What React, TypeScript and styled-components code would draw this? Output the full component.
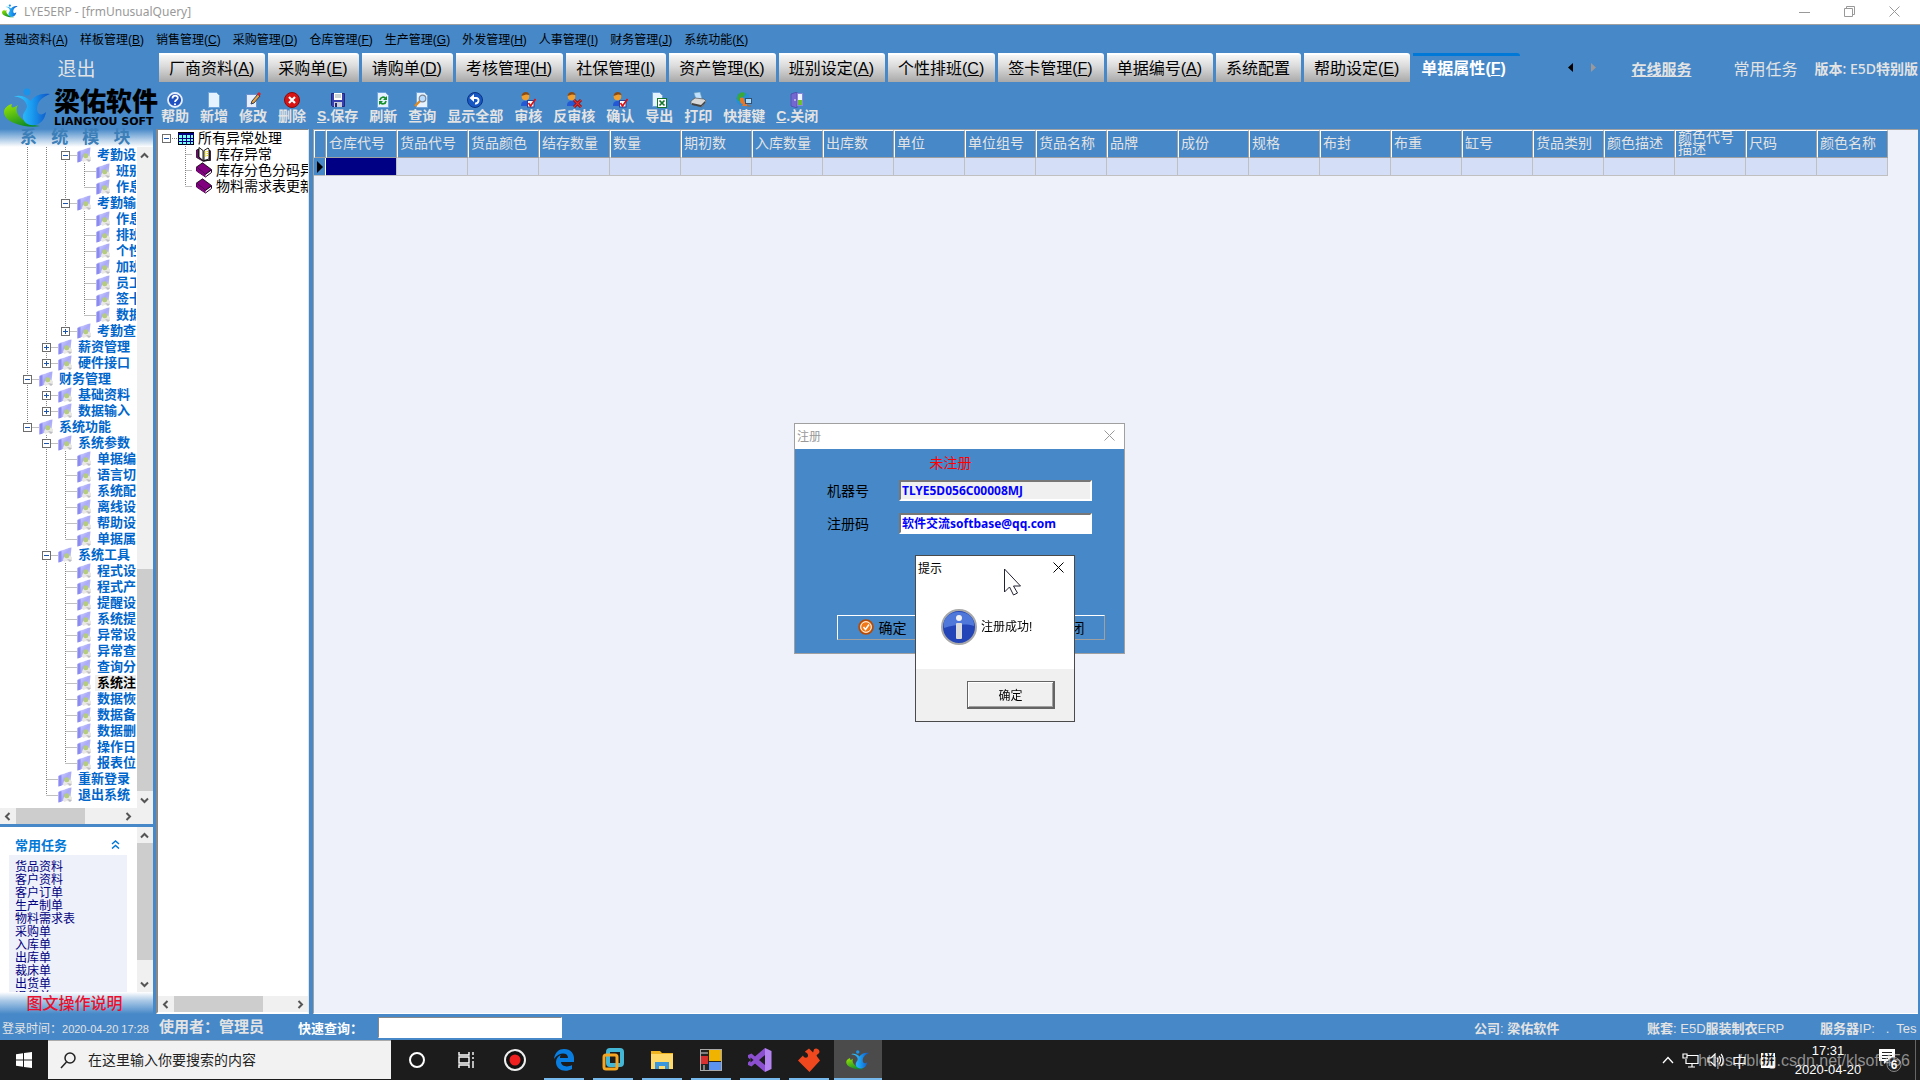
import React from 'react';
import styled, { createGlobalStyle, css } from 'styled-components';

const blue = '#4688c8';
const pale = '#eef1fa';
const soft = '#e3e3e3';
const link = '#0066cc';

const Global = createGlobalStyle`
  * { box-sizing: border-box; }
  body { margin: 0; font-family: "Liberation Sans", "Noto Sans CJK SC", sans-serif; font-size: 12px; }
  button, input { font: inherit; color: inherit; margin: 0; }
  button { background: none; border: 0; padding: 0; white-space: nowrap; }
  svg { display: block; flex: none; }
`;

const Screen = styled.div`
  display: flex;
  flex-direction: column;
  height: 100vh;
  overflow: hidden;
  background: ${blue};
`;

/* ---------- title, menu and tab bars ---------- */
const TitleBar = styled.header`
  display: flex;
  align-items: center;
  flex: none;
  height: 25px;
  padding: 0 14px 2px 2px;
  gap: 6px;
  background: #fff;
  border-bottom: 1px solid #a0a0a0;
  color: #999;
  font-family: "Noto Sans", "Noto Sans CJK SC", sans-serif;
`;
const TitleText = styled.h1`
  margin: 0;
  flex: 1;
  font-size: 12px;
  font-weight: 400;
`;
const WindowButtons = styled.div`
  display: flex;
  gap: 34px;
  padding-right: 6px;
`;
const MenuBar = styled.nav`
  display: flex;
  align-items: center;
  flex: none;
  height: 28px;
  padding: 0 0 2px 4px;
  gap: 12px;
  font-size: 12px;
  color: #000;
`;
const TabRow = styled.div`
  display: flex;
  flex: none;
  height: 29px;
`;
const Exit = styled.button`
  width: 159px;
  padding-right: 6px;
  font-size: 19px;
  color: ${soft};
`;
const Tabs = styled.div`
  display: flex;
  gap: 3px;
`;
const Tab = styled.button<{ $active?: boolean }>`
  padding: 0 11px 0 10px;
  font-size: 16px;
  line-height: 24px;
  color: #000;
  background: linear-gradient(#f6f6f6, #dcdcdc 40%, #a9a9a9);
  border-top: 2px solid #fff;
  border-top-right-radius: 3px;
  ${(p) =>
    p.$active &&
    css`
      color: #fff;
      background: none;
      font-weight: 700;
      padding: 0 14px 0 8px;
      border-top: 3px solid #0078d7;
    `}
`;
const TabExtras = styled.div`
  display: flex;
  align-items: center;
  margin-left: auto;
  padding-right: 2px;
  color: ${soft};
`;
const Arrows = styled.div`
  display: flex;
  gap: 18px;
  margin-right: 35px;
`;
const ServiceLink = styled.a`
  margin-right: 42px;
  padding-top: 2px;
  font-size: 15px;
  font-weight: 700;
  color: ${soft};
`;
const Common = styled.span`
  margin-right: 17px;
  font-size: 16px;
`;
const Version = styled.span`
  font-family: "Noto Sans", "Noto Sans CJK SC", sans-serif;
  font-size: 14px;
  font-weight: 500;
  b { font-weight: 700; }
`;

/* ---------- toolbar ---------- */
const ToolRow = styled.div`
  display: flex;
  flex: none;
  height: 47px;
`;
const Brand = styled.div`
  display: flex;
  align-items: center;
  gap: 3px;
  width: 161px;
  padding: 5px 0 0 4px;
  color: #000;
`;
const BrandName = styled.div`
  font-size: 26px;
  line-height: 28px;
  font-weight: 900;
  white-space: nowrap;
`;
const BrandSub = styled.div`
  font-family: "DejaVu Sans", sans-serif;
  font-size: 11px;
  line-height: 12px;
  font-weight: 700;
  white-space: nowrap;
`;
const Toolbar = styled.div`
  display: flex;
  align-items: flex-start;
  gap: 11px;
  padding-top: 10px;
`;
const Tool = styled.button`
  display: flex;
  flex-direction: column;
  align-items: center;
  font-size: 14px;
  line-height: 16px;
  font-weight: 700;
  color: ${soft};
`;

/* ---------- body ---------- */
const Body = styled.main`
  display: flex;
  flex: 1;
  min-height: 0;
`;
const Side = styled.aside`
  display: flex;
  flex-direction: column;
  width: 153px;
  flex: none;
`;
const ModuleBanner = styled.div`
  flex: none;
  height: 18px;
  padding-left: 20px;
  background: linear-gradient(${blue}, #fff);
  color: #3c7fb8;
  font-size: 17px;
  line-height: 18px;
  font-weight: 700;
  white-space: pre;
`;
const TreePane = styled.section`
  display: flex;
  flex: 1;
  min-height: 0;
  background: #fff;
`;
const TreeList = styled.ul`
  flex: 1;
  min-width: 0;
  margin: 0;
  padding: 0 1px 0 18px;
  list-style: none;
  overflow: hidden;
`;
const TreeItem = styled.li`
  display: flex;
  align-items: center;
  height: 16px;
`;
const TreeText = styled.a<{ $current?: boolean }>`
  margin-left: 3px;
  padding-left: 2px;
  flex: 1;
  overflow: hidden;
  font-size: 13px;
  line-height: 16px;
  font-weight: 700;
  white-space: nowrap;
  text-decoration: none;
  color: ${(p) => (p.$current ? '#000' : link)};
  background: ${(p) => (p.$current ? '#f0f0f0' : 'none')};
`;

const Bar = styled.div<{ $v?: boolean }>`
  display: flex;
  flex: none;
  flex-direction: ${(p) => (p.$v ? 'column' : 'row')};
  ${(p) => (p.$v ? 'width: 16px;' : 'height: 16px;')}
  background: #f0f0f0;
`;
const ArrowButton = styled.button`
  display: grid;
  place-items: center;
  flex: none;
  width: 15px;
  height: 16px;
`;
const Gap = styled.span<{ $n: number }>`
  flex: ${(p) => p.$n} 1 0;
`;
const Thumb = styled(Gap)`
  background: #cdcdcd;
`;
const SideHScroll = styled.div`
  display: grid;
  grid-template-columns: 1fr 17px;
  flex: none;
  background: #f0f0f0;
`;
const TaskPane = styled.section`
  display: flex;
  flex: none;
  height: 165px;
  margin-top: 3px;
  background: #fff;
`;
const TaskInner = styled.div`
  flex: 1;
  padding: 8px 10px 0 9px;
  overflow: hidden;
`;
const TaskHead = styled.div`
  display: flex;
  align-items: center;
  justify-content: space-between;
  height: 20px;
  padding: 0 7px 2px 6px;
  font-size: 13px;
  font-weight: 700;
  color: #0078d7;
`;
const TaskLinks = styled.div`
  display: flex;
  flex-direction: column;
  padding: 6px 6px 4px;
  background: ${pale};
  a {
    color: #000080;
    text-decoration: none;
    font-size: 12px;
    line-height: 13px;
  }
`;
const HelpBanner = styled.a`
  flex: none;
  height: 22px;
  padding: 1px 4px 0 0;
  background: linear-gradient(#fff, #a9c8e6 40%, ${blue});
  color: #e8102c;
  font-size: 16px;
  line-height: 21px;
  font-weight: 500;
  text-align: center;
  text-decoration: none;
`;

const Middle = styled.section`
  display: flex;
  flex-direction: column;
  flex: none;
  width: 153px;
  margin-left: 3px;
  background: #fff;
  border: 1px solid #888;
  border-left-width: 2px;
  border-right-color: #e3e3e3;
  border-bottom: 2px solid #fff;
`;
const MidList = styled.ul`
  flex: 1;
  margin: 0;
  padding: 0 0 0 4px;
  list-style: none;
  overflow: hidden;
`;
const MidItem = styled.li`
  display: flex;
  align-items: center;
  height: 16px;
  gap: 4px;
  font-size: 14px;
  line-height: 16px;
  white-space: nowrap;
  color: #000;
`;

const GridPane = styled.section`
  flex: 1;
  min-width: 0;
  margin: 0 2px 0 4px;
  background: ${pale};
  border-top: 1px solid #a0a0a0;
  border-left: 1px solid #a0a0a0;
  border-bottom: 1px solid #fff;
  overflow: hidden;
`;
const Table = styled.table`
  table-layout: fixed;
  border-collapse: separate;
  border-spacing: 0;
  width: 1574px;
  th {
    height: 28px;
    padding: 0 0 2px 2px;
    background: ${blue};
    color: ${soft};
    font-size: 14px;
    line-height: 12px;
    font-weight: 400;
    text-align: left;
    border-left: 1px solid #fff;
    border-top: 1px solid #fff;
    border-right: 1px solid #a0a0a0;
    border-bottom: 1px solid #a0a0a0;
  }
  td {
    height: 18px;
    padding: 0;
    background: #d4def7;
    border-right: 1px solid #c0c0c0;
    border-bottom: 1px solid #c0c0c0;
  }
`;
const MarkCol = styled.col`
  width: 12px;
`;
const Marker = styled.td`
  && { background: ${blue}; border-right-color: #fff; }
`;
const Picked = styled.td`
  && { background: #000084; }
`;

/* ---------- status bar ---------- */
const Status = styled.footer`
  display: flex;
  align-items: center;
  flex: none;
  height: 26px;
  padding-left: 2px;
  color: ${soft};
  white-space: nowrap;
`;
const Login = styled.span`
  width: 157px;
  font-size: 12px;
  time { font-size: 11px; }
`;
const User = styled.span`
  width: 139px;
  font-size: 15px;
  line-height: 20px;
  font-weight: 700;
`;
const QuickLabel = styled.label`
  width: 80px;
  font-size: 13px;
  font-weight: 700;
  color: #fff;
`;
const QuickInput = styled.input`
  width: 184px;
  height: 21px;
  background: #fff;
  border: 1px solid #fff;
  border-top-color: #888;
  border-left-color: #888;
`;
const StatusRight = styled.div`
  display: flex;
  margin-left: auto;
  font-size: 13px;
  b { font-weight: 700; }
`;
const Company = styled.span`
  width: 173px;
`;
const Account = styled.span`
  width: 173px;
`;
const Server = styled.span`
  width: 100px;
  overflow: hidden;
  white-space: pre;
`;

/* ---------- dialogs ---------- */
const Backdrop = styled.div`
  position: fixed;
  inset: 0;
  display: grid;
  place-items: center;
  padding: 0 1px 3px 0;
  pointer-events: none;
`;
const Dialog = styled.form`
  position: relative;
  width: 331px;
  margin: 0;
  background: ${blue};
  border: 1px solid #a0a0a0;
  pointer-events: auto;
`;
const DialogTitle = styled.div`
  display: flex;
  align-items: center;
  justify-content: space-between;
  height: 25px;
  padding: 0 9px 2px 2px;
  background: #fff;
  color: #999;
`;
const Warn = styled.div`
  padding: 5px 18px 2px 0;
  text-align: center;
  font-size: 14px;
  line-height: 18px;
  color: #f00;
`;
const Field = styled.div`
  display: flex;
  align-items: center;
  height: 33px;
  padding-left: 32px;
  font-size: 14px;
  color: #000;
  label { width: 72px; padding-bottom: 2px; }
`;
const FieldInput = styled.input<{ $grey?: boolean }>`
  width: 193px;
  height: 21px;
  padding: 0 1px 1px;
  background: ${(p) => (p.$grey ? '#f0f0f0' : '#fff')};
  border: 2px solid #fff;
  border-top-color: #777;
  border-left-color: #777;
  font-family: "Noto Sans", "Noto Sans CJK SC", sans-serif;
  font-size: 12px;
  font-weight: 700;
  color: #00f;
`;
const DialogButtons = styled.div`
  display: flex;
  justify-content: space-between;
  padding: 75px 19px 13px 42px;
`;
const FlatButton = styled.button`
  display: flex;
  align-items: center;
  justify-content: center;
  gap: 5px;
  width: 90px;
  height: 25px;
  padding-bottom: 2px;
  border: 1px solid;
  border-color: #fff #a0a0a0 #a0a0a0 #fff;
  font-size: 14px;
  color: #000;
`;
const Popup = styled.div`
  position: absolute;
  left: 120px;
  top: 131px;
  width: 160px;
  background: #fff;
  border: 1px solid #4a4a4a;
  color: #000;
`;
const PopupTitle = styled.div`
  display: flex;
  align-items: center;
  justify-content: space-between;
  height: 25px;
  padding: 0 10px 2px 2px;
`;
const PopupBody = styled.div`
  display: flex;
  align-items: center;
  gap: 4px;
  height: 88px;
  padding: 4px 0 0 25px;
  span { padding-bottom: 4px; }
`;
const PopupFoot = styled.div`
  display: flex;
  justify-content: flex-end;
  height: 52px;
  padding: 12px 19px 0 0;
  background: #f0f0f0;
`;
const RaisedButton = styled.button`
  width: 88px;
  height: 28px;
  background: #f0f0f0;
  border: 1px solid #646464;
  border-right-width: 2px;
  border-bottom-width: 2px;
  box-shadow: inset 1px 1px #fff, inset -1px -1px #a0a0a0;
`;
const Pointer = styled.svg`
  position: absolute;
  left: 87px;
  top: 12px;
`;

/* ---------- taskbar ---------- */
const Taskbar = styled.footer`
  position: relative;
  display: flex;
  flex: none;
  height: 40px;
  background: #1c1c1c;
  color: #fff;
`;
const Start = styled.button`
  display: grid;
  place-items: center;
  width: 48px;
`;
const Search = styled.label`
  display: flex;
  align-items: center;
  gap: 12px;
  width: 343px;
  height: 39px;
  padding-left: 12px;
  background: #f2f2f2;
  border-top: 1px solid #aaa;
  input {
    flex: 1;
    min-width: 0;
    border: 0;
    padding: 0;
    background: none;
    font-size: 14px;
  }
  input::placeholder { color: #222; opacity: 1; }
`;
const Apps = styled.div`
  display: flex;
  gap: 1px;
  padding-left: 2px;
`;
const AppButton = styled.button<{ $open?: boolean; $active?: boolean }>`
  display: flex;
  flex-direction: column;
  align-items: center;
  justify-content: center;
  position: relative;
  width: 48px;
  background: ${(p) => (p.$active ? '#4b4b4b' : 'none')};
  &::after {
    content: '';
    position: absolute;
    bottom: 0;
    left: ${(p) => (p.$active ? '0' : '4px')};
    right: ${(p) => (p.$active ? '0' : '4px')};
    height: 2px;
    background: ${(p) => (p.$open ? '#76b9ed' : 'none')};
  }
`;
const Tray = styled.div`
  display: flex;
  align-items: center;
  margin-left: auto;
  padding-right: 4px;
`;
const TrayIcons = styled.div`
  display: flex;
  align-items: center;
  gap: 8px;
  margin-right: 15px;
  font-size: 15px;
`;
const Ime = styled.span`
  margin: 0 4px 0 6px;
  width: 14px;
  height: 15px;
  background: #fff;
  color: #111;
  font-size: 13px;
  line-height: 14px;
  font-weight: 700;
  text-align: center;
`;
const Clock = styled.div`
  width: 68px;
  margin-right: 16px;
  text-align: center;
  font-size: 13px;
  line-height: 19px;
`;
const Notice = styled.button`
  padding-right: 13px;
  border-right: 1px solid #666;
  height: 40px;
`;
const Watermark = styled.span`
  position: absolute;
  right: 10px;
  top: 10px;
  font-size: 16px;
  line-height: 22px;
  color: rgba(220, 220, 220, 0.6);
`;

/* ---------- drawings ---------- */
const Logo = ({ w, h }: { w: number; h: number }) => (
  <svg width={w} height={h} viewBox="0 0 47 40">
    <defs>
      <linearGradient id="body" x1="0" x2="1">
        <stop offset="0" stopColor="#3ad0ff" />
        <stop offset=".5" stopColor="#1a9bf0" />
        <stop offset="1" stopColor="#0d4fc4" />
      </linearGradient>
      <linearGradient id="leaf" x1="0" y1="0" x2=".6" y2="1">
        <stop offset="0" stopColor="#9be800" />
        <stop offset="1" stopColor="#0c8a28" />
      </linearGradient>
    </defs>
    <circle cx="23" cy="4" r="3.4" fill="#1c93ea" />
    <path d="M8 16C-3 19 -3 30 10 35C18 38.500 28 39.500 36 38C26 37 19 33 15 28C12 24 12 20 14 17C10 20 6 21 8 16Z" fill="url(#leaf)" />
    <path d="M10 8.500C18 9 22 13 23 18C23 22 18 25 19 30C20 35 25 38 31 37C37 36 41 31 42 24C38 28 33 27 33 21C33 14 38 9 46 6C37 4.500 30 8 26.500 13C22 8 15 6.500 10 8.500Z" fill="url(#body)" />
  </svg>
);
const Cross = ({ c = '#999', s = 11 }: { c?: string; s?: number }) => (
  <svg width={s} height={s} viewBox="0 0 11 11" stroke={c} fill="none"><path d="M.5 .5l10 10M10.500 .5l-10 10" /></svg>
);
const rot: Record<string, number> = { up: 0, right: 90, down: 180, left: 270 };
const Chevron = ({ d }: { d: string }) => (
  <svg width="9" height="9" viewBox="0 0 9 9" fill="none" stroke="#555" strokeWidth="2">
    <path d="M1 6.500l3.500-3.500 3.500 3.500" transform={`rotate(${rot[d]} 4.500 4.500)`} />
  </svg>
);
const Folder = () => (
  <svg width="15" height="16" viewBox="0 0 15 16">
    <defs>
      <linearGradient id="cover" x1="0" y1="0" x2="1" y2="1">
        <stop offset="0" stopColor="#d9d9ff" />
        <stop offset=".5" stopColor="#a9a9f8" />
        <stop offset="1" stopColor="#cfcfff" />
      </linearGradient>
    </defs>
    <path d="M.5 5C2 3 3.500 3.500 5 3C8 2.500 9 1 13.500 .5L12.500 11L3.500 14.500L.5 15.500Z" fill="url(#cover)" />
    <path d="M.5 15.500V5L3.500 4V14.500Z" fill="#8a8af0" />
    <path d="M6 10l4-2 4 2v3l-2 2-3-1-3 1-1-2z" fill="#e9e8e4" />
    <path d="M9 12l3 3 2-2z" fill="#bcbcc4" />
    <circle cx="8.700" cy="8.800" r="2.500" fill="#b5cc7e" />
  </svg>
);
const Person = () => (
  <>
    <path d="M1 14c0-5 3-5 5-5s5 1 5 5z" fill="#2459d6" />
    <circle cx="5.500" cy="4.500" r="3.800" fill="#f0a030" />
    <path d="M1.500 4C2-1 9-1 9.500 3L6 2.500z" fill="#8b4a10" />
  </>
);
const Check = () => (
  <>
    <rect x="7.500" y="8.500" width="6.500" height="6.500" fill="#fff" stroke="#24449c" />
    <path d="M8.500 11l2 3 5-7" fill="none" stroke="#e01010" strokeWidth="1.600" />
  </>
);
const Page = () => <path d="M2.500 .5h8l3 3v12h-11z" fill="#e6f2ff" stroke="#6fa5dc" />;
const art: Record<string, React.ReactNode> = {
  help: (
    <>
      <circle cx="8" cy="8" r="7" fill="#1f4fc0" stroke="#e8efff" strokeWidth="1.800" />
      <path d="M5.500 6.500c0-4 5.500-3.500 5.300-.5C10.600 8 8 8 8 10" fill="none" stroke="#fff" strokeWidth="1.800" />
      <circle cx="8" cy="12.300" r="1.100" fill="#fff" />
    </>
  ),
  add: <Page />,
  edit: (
    <>
      <path d="M1.500 2.500h10v13h-10z" fill="#e4eefc" stroke="#6c8fd0" />
      <path d="M6 12l1-3 6-7 2 2-6 7z" fill="#e8a13c" stroke="#35405c" />
      <path d="M12 2l2-2 2 2-2 2z" fill="#d22" />
    </>
  ),
  del: (
    <>
      <circle cx="8" cy="8" r="7.500" fill="#d81414" stroke="#8d0a0a" />
      <path d="M5 5l6 6M11 5l-6 6" stroke="#fff" strokeWidth="2.200" />
    </>
  ),
  save: (
    <>
      <path d="M1.500 1.500h13v13h-12l-1-1z" fill="#3a3fb0" stroke="#23277c" />
      <path d="M4 1h8v7H4z" fill="#fff" />
      <path d="M5 3h6M5 5h6" stroke="#9aa" />
      <path d="M4 10h8v5H4z" fill="#c8ccd8" />
      <path d="M5 11h2v4H5z" fill="#23277c" />
    </>
  ),
  refresh: (
    <>
      <Page />
      <path d="M5 8c.5-3 4-4 6-1M11 9c-.5 3-4 4-6 1" fill="none" stroke="#15902c" strokeWidth="1.700" />
      <path d="M12 4v4H8zM4 13V9h4z" fill="#15902c" />
    </>
  ),
  query: (
    <>
      <Page />
      <path d="M1 14l5-5" stroke="#e08a1c" strokeWidth="2.400" />
      <circle cx="8.500" cy="6.500" r="3.300" fill="#b8dcff" stroke="#7d8796" strokeWidth="1.200" />
    </>
  ),
  all: (
    <>
      <circle cx="8" cy="8" r="7.500" fill="#1757c4" stroke="#0c3380" />
      <path d="M5 6h4c4 0 3 6-1 5.500" fill="none" stroke="#fff" strokeWidth="1.900" />
      <path d="M7 2v8L2.500 6z" fill="#fff" />
    </>
  ),
  audit: <><Person /><Check /></>,
  unaudit: (
    <>
      <Person />
      <path d="M8 8l7 7M15 8l-7 7" stroke="#8a1010" strokeWidth="3" />
      <path d="M8 8l7 7M15 8l-7 7" stroke="#e03030" strokeWidth="1.200" />
    </>
  ),
  excel: (
    <>
      <path d="M1.500 .5h7l3 3v11h-10z" fill="#e6f2ff" stroke="#6fa5dc" />
      <rect x="6.500" y="6.500" width="9" height="9" fill="#fff" stroke="#15752c" />
      <path d="M8.500 8.500l5 5M13.500 8.500l-5 5" stroke="#15752c" strokeWidth="1.700" />
    </>
  ),
  print: (
    <>
      <path d="M4 1l6-1 2 7H6z" fill="#bfe0ff" stroke="#7ab" strokeWidth=".6" />
      <path d="M1 9l4-3 9 1 2 2-4 6-11-3z" fill="#d8d8d8" stroke="#555" strokeWidth=".7" />
      <path d="M2 11l9 2 4-4v2l-4 4-9-2z" fill="#444" />
    </>
  ),
  keys: (
    <>
      <circle cx="7" cy="7" r="6.800" fill="#2390d8" />
      <path d="M2 3c3-4 8-3 7 0s-5 1-4 5-4 0-4-2z" fill="#39a83a" />
      <path d="M4 6c4-2 5 2 4 4l3-2v6H6l1-2C4 12 4 9 4 6z" fill="#e8772a" />
      <rect x="9.500" y="6.500" width="6" height="5" fill="#a7dcff" stroke="#34506c" />
      <path d="M11 13h4v2h-4z" fill="#777" />
    </>
  ),
  close: (
    <>
      <path d="M2 2l6-2v16l-6-2z" fill="#7468d0" stroke="#4a3fa4" strokeWidth=".6" />
      <path d="M8.500 1.500h5v12h-5z" fill="#eef5ff" stroke="#8f84dc" />
      <path d="M9 8h4v5H9z" fill="#6fc02c" />
      <circle cx="6" cy="8" r=".8" fill="#fff" />
    </>
  ),
};
const Glyph = ({ n }: { n: string }) => <svg width="16" height="16" viewBox="0 0 16 16">{art[n]}</svg>;

/* ---------- scroll bars ---------- */
const Scroll = ({ v, a, t, b, name }: { v?: boolean; a: number; t: number; b: number; name: string }) => (
  <Bar $v={v} aria-label={name}>
    <ArrowButton type="button" aria-label="向前"><Chevron d={v ? 'up' : 'left'} /></ArrowButton>
    <Gap $n={a} /><Thumb $n={t} /><Gap $n={b} />
    <ArrowButton type="button" aria-label="向后"><Chevron d={v ? 'down' : 'right'} /></ArrowButton>
  </Bar>
);

/* ---------- module tree: depth, text, expander ---------- */
type Row = [number, string, string?];
const rows: Row[] = [
  [2, '考勤设', '-'], [3, '班别'], [3, '作息'], [2, '考勤输', '-'], [3, '作息'], [3, '排班'], [3, '个性'], [3, '加班'],
  [3, '员工'], [3, '签卡'], [3, '数据'], [2, '考勤查', '+'], [1, '薪资管理', '+'], [1, '硬件接口', '+'],
  [0, '财务管理', '-'], [1, '基础资料', '+'], [1, '数据输入', '+'], [0, '系统功能', '-'], [1, '系统参数', '-'],
  [2, '单据编'], [2, '语言切'], [2, '系统配'], [2, '离线设'], [2, '帮助设'], [2, '单据属'], [1, '系统工具', '-'],
  [2, '程式设'], [2, '程式产'], [2, '提醒设'], [2, '系统提'], [2, '异常设'], [2, '异常查'], [2, '查询分'],
  [2, '系统注'], [2, '数据恢'], [2, '数据备'], [2, '数据删'], [2, '操作日'], [2, '报表位'], [1, '重新登录'], [1, '退出系统'],
];
const continues = (i: number, col: number) => {
  for (let j = i + 1; j < rows.length; j++) {
    if (rows[j][0] < col) return false;
    if (rows[j][0] === col) return true;
  }
  return false;
};
const Guides = ({ i }: { i: number }) => {
  const [depth, , box] = rows[i];
  const w = (depth + 1) * 19 + 2;
  const x = depth * 19 + 9.5;
  return (
    <svg width={w} height="16" fill="none" stroke="#808080" strokeDasharray="1 1">
      {Array.from({ length: depth }, (_, c) => continues(i, c) && <path key={c} d={`M${c * 19 + 9.5} 0v16`} />)}
      <path d={`M${x} 0v${continues(i, depth) ? 16 : 8}M${x} 8.500H${w}`} />
      {box && <Box x={x} sign={box} />}
    </svg>
  );
};
const Box = ({ x, sign }: { x: number; sign: string }) => (
  <g strokeDasharray="none">
    <rect x={x - 4} y="4.500" width="8" height="8" fill="#fff" stroke="#6d6d6d" />
    <path d={`M${x - 2.5} 8.500h5` + (sign === '+' ? `M${x} 6v5` : '')} stroke="#1f55a8" />
  </g>
);

const menus: [string, string][] = [
  ['基础资料', 'A'], ['样板管理', 'B'], ['销售管理', 'C'], ['采购管理', 'D'], ['仓库管理', 'F'],
  ['生产管理', 'G'], ['外发管理', 'H'], ['人事管理', 'I'], ['财务管理', 'J'], ['系统功能', 'K'],
];
const tabs: [string, string?][] = [
  ['厂商资料', 'A'], ['采购单', 'E'], ['请购单', 'D'], ['考核管理', 'H'], ['社保管理', 'I'], ['资产管理', 'K'],
  ['班别设定', 'A'], ['个性排班', 'C'], ['签卡管理', 'F'], ['单据编号', 'A'], ['系统配置'], ['帮助设定', 'E'], ['单据属性', 'F'],
];
const tools: [string, string, string?][] = [
  ['help', '帮助'], ['add', '新增'], ['edit', '修改'], ['del', '删除'], ['save', '保存', 'S'], ['refresh', '刷新'],
  ['query', '查询'], ['all', '显示全部'], ['audit', '审核'], ['unaudit', '反审核'], ['audit', '确认'], ['excel', '导出'],
  ['print', '打印'], ['keys', '快捷键'], ['close', '关闭', 'C'],
];
const columns = [
  '仓库代号', '货品代号', '货品颜色', '结存数量', '数量', '期初数', '入库数量', '出库数', '单位', '单位组号', '货品名称',
  '品牌', '成份', '规格', '布封', '布重', '缸号', '货品类别', '颜色描述', '颜色代号描述', '尺码', '颜色名称',
];
const tasks = ['货品资料', '客户资料', '客户订单', '生产制单', '物料需求表', '采购单', '入库单', '出库单', '裁床单', '出货单', '退货单'];
const Key = ({ k }: { k?: string }) => (k ? <>(<u>{k}</u>)</> : null);

const Book = ({ open }: { open?: boolean }) => (
  <svg width="16" height="16" viewBox="0 0 16 16">
    {open ? (
      <>
        <path d="M.5 4l2-1v8l5 3.500h7V5l-1-1v10l-6 1.500-7-4z" fill="#800080" stroke="#000" strokeWidth=".7" />
        <path d="M3 1.500l4 3v10l-4-3.500zM8 4.500l4-2.500 1 1v10l-5 1.500z" fill="#fff" stroke="#000" strokeWidth=".9" />
        <path d="M9.500 5.500v6M11.500 5v6" stroke="#e5d800" strokeDasharray="1 1" strokeWidth="1.500" />
      </>
    ) : (
      <>
        <path d="M.5 5.500v3.500l9 6 6-4.500V8L9.500 12z" fill="#fff" stroke="#300030" />
        <path d="M.5 5L6.500 .8 15.500 7.500 9.500 12.500z" fill="#800080" stroke="#000" strokeWidth=".8" />
        <path d="M.5 5v4l9 6v-2.500z" fill="#800080" />
      </>
    )}
  </svg>
);

const appIcons: React.ReactNode[] = [
  <circle cx="12" cy="12" r="7" fill="none" stroke="#fff" strokeWidth="2" />,
  <path d="M5 4v3h10V4M5 20v-3h10v3M5 9h10v6H5zM19 4v3M19 9v2M19 13v7" fill="none" stroke="#fff" strokeWidth="1.400" />,
  <><circle cx="12" cy="12" r="10" fill="#111" stroke="#eee" strokeWidth="2" /><circle cx="12" cy="12" r="5.500" fill="#f02020" /></>,
  <path d="M2 11C3 4 7 1 12 1c7 0 10 5 10 9v4H9c0 4 6 6 11 3v4c-7 4-16 1-16-7 0-3 2-6 5-7-1 1-1 2-1 3h8c0-6-9-6-14 1z" fill="#0a7ee0" />,
  <><rect x="7" y="2" width="14" height="15" rx="2" fill="none" stroke="#45b7d6" strokeWidth="4" /><rect x="3" y="7" width="13" height="14" rx="2" fill="none" stroke="#f5a623" strokeWidth="3" /></>,
  <><path d="M1 3h9l2 2h11v16H1z" fill="#f0b420" /><path d="M1 6h22v15H1z" fill="#ffd96a" /><path d="M5 21v-7h14v7h-4v-3H9v3z" fill="#3a96dd" /></>,
  <><rect x="1.500" y="1.500" width="21" height="21" fill="#222" stroke="#aaa" /><path d="M10 2h12v11H10z" fill="#f0b400" /><path d="M2 8h7v8H2z" fill="#d83030" /><path d="M10 14h12v8H10z" fill="#5c92f0" /><path d="M5 17v5M2 5h7" stroke="#ddd" /></>,
  <><path d="M17 0l6.500 3v18L17 24z" fill="#b583f0" /><path d="M17 0v7L3.500 18.500L0 17V7L3.500 5.500L17 17v7L0 9.500V14.500z" fill="#8b4fd0" fillRule="nonzero" /><path d="M2.500 9.500v5L5.500 12z" fill="#1c1c1c" /></>,
  <path d="M1 12.500L6 7.500c1 3 5 3 5 0s-3-3-3-4L12 .5l4 4c1-1 0-4 3-4s5 4 2 5.500c-1 .5-2 1-1 2.500l3 4L12.500 24z" fill="#f0481e" />,
];

export default function App() {
  return (
    <Screen>
      <Global />
      <TitleBar>
        <Logo w={16} h={14} />
        <TitleText>LYE5ERP - [frmUnusualQuery]</TitleText>
        <WindowButtons>
          <button aria-label="最小化"><svg width="11" height="11" stroke="#999"><path d="M0 6.500h11" /></svg></button>
          <button aria-label="还原"><svg width="11" height="11" stroke="#999" fill="none"><path d="M.5 2.500h8v8h-8zM2.500 2.500v-2h8v8h-2" /></svg></button>
          <button aria-label="关闭"><Cross /></button>
        </WindowButtons>
      </TitleBar>
      <MenuBar>
        {menus.map(([t, k]) => <button key={k}>{t}<Key k={k} /></button>)}
      </MenuBar>
      <TabRow>
        <Exit>退出</Exit>
        <Tabs>
          {tabs.map(([t, k], i) => <Tab key={t} $active={i === tabs.length - 1}>{t}<Key k={k} /></Tab>)}
        </Tabs>
        <TabExtras>
          <Arrows>
            <button aria-label="向左"><svg width="5" height="9"><path d="M5 0v9L0 4.500z" fill="#000" /></svg></button>
            <button aria-label="向右"><svg width="5" height="9"><path d="M0 0v9l5-4.500z" fill="#999" /></svg></button>
          </Arrows>
          <ServiceLink href="#">在线服务</ServiceLink>
          <Common>常用任务</Common>
          <Version><b>版本</b>: E5D<b>特别版</b></Version>
        </TabExtras>
      </TabRow>
      <ToolRow>
        <Brand>
          <Logo w={47} h={40} />
          <div>
            <BrandName>梁佑软件</BrandName>
            <BrandSub>LIANGYOU SOFT</BrandSub>
          </div>
        </Brand>
        <Toolbar>
          {tools.map(([g, t, k]) => (
            <Tool key={t}><Glyph n={g} /><span>{k && <><u>{k}</u>.</>}{t}</span></Tool>
          ))}
        </Toolbar>
      </ToolRow>

      <Body>
        <Side>
          <ModuleBanner>系   统   模   块</ModuleBanner>
          <TreePane>
            <TreeList>
              {rows.map(([, t], i) => (
                <TreeItem key={i}>
                  <Guides i={i} />
                  <Folder />
                  <TreeText href="#" $current={t === '系统注'}>{t}</TreeText>
                </TreeItem>
              ))}
            </TreeList>
            <Scroll v a={405} t={221} b={1} name="模块滚动条" />
          </TreePane>
          <SideHScroll><Scroll a={1} t={68} b={36} name="横向滚动条" /></SideHScroll>
          <TaskPane>
            <TaskInner>
              <TaskHead>
                常用任务
                <svg width="9" height="9" fill="none" stroke="#0078d7" strokeWidth="1.500"><path d="M1 4l3.500-3 3.500 3M1 8.500l3.500-3 3.500 3" /></svg>
              </TaskHead>
              <TaskLinks>{tasks.map((t) => <a key={t} href="#">{t}</a>)}</TaskLinks>
            </TaskInner>
            <Scroll v a={0} t={115} b={16} name="任务滚动条" />
          </TaskPane>
          <HelpBanner href="#">图文操作说明</HelpBanner>
        </Side>

        <Middle>
          <MidList>
            <MidItem>
              <svg width="32" height="16" fill="none">
                <path d="M10 8.500h6" stroke="#808080" strokeDasharray="1 1" />
                <Box x={4.5} sign="-" />
                <rect x="16.500" y="2.500" width="15" height="12" fill="#7ff" stroke="#000" />
                <path d="M16 4h16" stroke="#000080" strokeWidth="2" />
                <path d="M20.500 3v12M24.500 3v12M28.500 3v12M16 8.500h16M16 11.500h16" stroke="#000080" />
              </svg>
              所有异常处理
            </MidItem>
            {['库存异常', '库存分色分码异常', '物料需求表更新'].map((t, i) => (
              <MidItem key={t}>
                <svg width="30" height="16" fill="none" stroke="#808080" strokeDasharray="1 1">
                  <path d={`M23.500 0v${i === 2 ? 8 : 16}M23.500 8.500h7`} />
                </svg>
                <Book open={i === 0} />
                {t}
              </MidItem>
            ))}
          </MidList>
          <Scroll a={1} t={87} b={29} name="列表滚动条" />
        </Middle>

        <GridPane>
          <Table>
            <colgroup><MarkCol />{columns.map((c) => <col key={c} />)}</colgroup>
            <thead><tr><th />{columns.map((c) => <th key={c}>{c}</th>)}</tr></thead>
            <tbody>
              <tr>
                <Marker><svg width="10" height="12"><path d="M3 0v12l6-6z" fill="#000" /></svg></Marker>
                <Picked />
                {columns.slice(1).map((c) => <td key={c} />)}
              </tr>
            </tbody>
          </Table>
        </GridPane>
      </Body>

      <Status>
        <Login>登录时间：<time>2020-04-20 17:28</time></Login>
        <User>使用者：管理员</User>
        <QuickLabel htmlFor="quick">快速查询：</QuickLabel>
        <QuickInput id="quick" />
        <StatusRight>
          <Company><b>公司</b>: <b>梁佑软件</b></Company>
          <Account><b>账套</b>: E5D<b>服装制衣</b>ERP</Account>
          <Server><b>服务器</b>IP:   .  Tes</Server>
        </StatusRight>
      </Status>

      <Taskbar>
        <Start aria-label="开始">
          <svg width="16" height="16" fill="#fff"><path d="M0 2.300L7 1.300V7.500H0zM8 1.100L16 0V7.500H8zM0 8.500h7v6.200l-7-1zM8 8.500h8V16l-8-1.100z" /></svg>
        </Start>
        <Search>
          <svg width="16" height="17" fill="none" stroke="#222" strokeWidth="1.500"><circle cx="10" cy="6" r="5" /><path d="M6.500 10L1 16" /></svg>
          <input placeholder="在这里输入你要搜索的内容" aria-label="搜索" />
        </Search>
        <Apps>
          {appIcons.map((ic, i) => (
            <AppButton key={i} $open={i > 2}>
              <svg width="24" height="24" viewBox="0 0 24 24">{ic}</svg>
            </AppButton>
          ))}
          <AppButton $open $active><Logo w={24} h={20} /></AppButton>
        </Apps>
        <Tray>
          <TrayIcons>
            <svg width="12" height="8" fill="none" stroke="#fff" strokeWidth="1.300"><path d="M1 7l5-5.500L11 7" /></svg>
            <svg width="17" height="15" fill="none" stroke="#fff" strokeWidth="1.200"><path d="M5 2.500h11v8H4V6M10 11v3M6 14h7M1 1h4v4H1z" /></svg>
            <svg width="17" height="14" fill="none" stroke="#fff" strokeWidth="1.200"><path d="M1 5h3l4-4v12L4 9H1zM10 5c1 1 1 3 0 4M12 3c2 2 2 6 0 8M14 1c3 3 3 9 0 12" /></svg>
            <span>中</span>
            <Ime>拼</Ime>
          </TrayIcons>
          <Clock>17:31<br />2020-04-20</Clock>
          <Notice aria-label="通知">
            <svg width="24" height="26" viewBox="0 0 24 26">
              <path d="M1 2h16v12H9l-3 3v-3H1z" fill="#fff" />
              <path d="M4 5.500h10M4 8.500h10M4 11.500h6" stroke="#222" />
              <circle cx="16" cy="17.500" r="7" fill="#222" stroke="#888" />
              <text x="16" y="22" fontSize="12" fontWeight="700" fill="#fff" textAnchor="middle">6</text>
            </svg>
          </Notice>
        </Tray>
        <Watermark>https://blog.csdn.net/klsoft456</Watermark>
      </Taskbar>

      <Backdrop>
        <Dialog onSubmit={(e) => e.preventDefault()}>
          <DialogTitle>注册<button type="button" aria-label="关闭"><Cross /></button></DialogTitle>
          <Warn>未注册</Warn>
          <Field><label htmlFor="machine">机器号</label><FieldInput id="machine" $grey readOnly value="TLYE5D056C00008MJ" /></Field>
          <Field><label htmlFor="code">注册码</label><FieldInput id="code" defaultValue="软件交流softbase@qq.com" /></Field>
          <DialogButtons>
            <FlatButton type="button">
              <svg width="16" height="16"><circle cx="8" cy="8" r="7" fill="#f07818" stroke="#b44a08" strokeWidth="1.500" /><circle cx="8" cy="8" r="5.300" fill="none" stroke="#fff" /><path d="M5.500 8l2 2.500L11 5.500" fill="none" stroke="#fff" strokeWidth="1.500" /></svg>
              确定
            </FlatButton>
            <FlatButton type="button"><Cross c="#c22" s={16} />关闭</FlatButton>
          </DialogButtons>
          <Popup role="alertdialog">
            <PopupTitle>提示<button type="button" aria-label="关闭"><Cross c="#000" /></button></PopupTitle>
            <PopupBody>
              <svg width="36" height="36" viewBox="0 0 36 36">
                <circle cx="18" cy="18" r="17" fill="#2345b8" stroke="#a8a8a8" strokeWidth="2" />
                <path d="M3 19C1 9 9 3 18 3s16 6 15 14C24 14 13 16 3 19z" fill="#4f78da" />
                <circle cx="18" cy="9" r="3" fill="#f2f2f2" />
                <rect x="15" y="14" width="6" height="16" rx="1" fill="#dcdcdc" />
              </svg>
              <span>注册成功!</span>
            </PopupBody>
            <PopupFoot><RaisedButton type="button">确定</RaisedButton></PopupFoot>
            <Pointer width="20" height="28" viewBox="0 0 20 28"><path d="M1.500 1v23l5-5 4 8 4-2-4-7h7z" fill="#fff" stroke="#223" /></Pointer>
          </Popup>
        </Dialog>
      </Backdrop>
    </Screen>
  );
}
